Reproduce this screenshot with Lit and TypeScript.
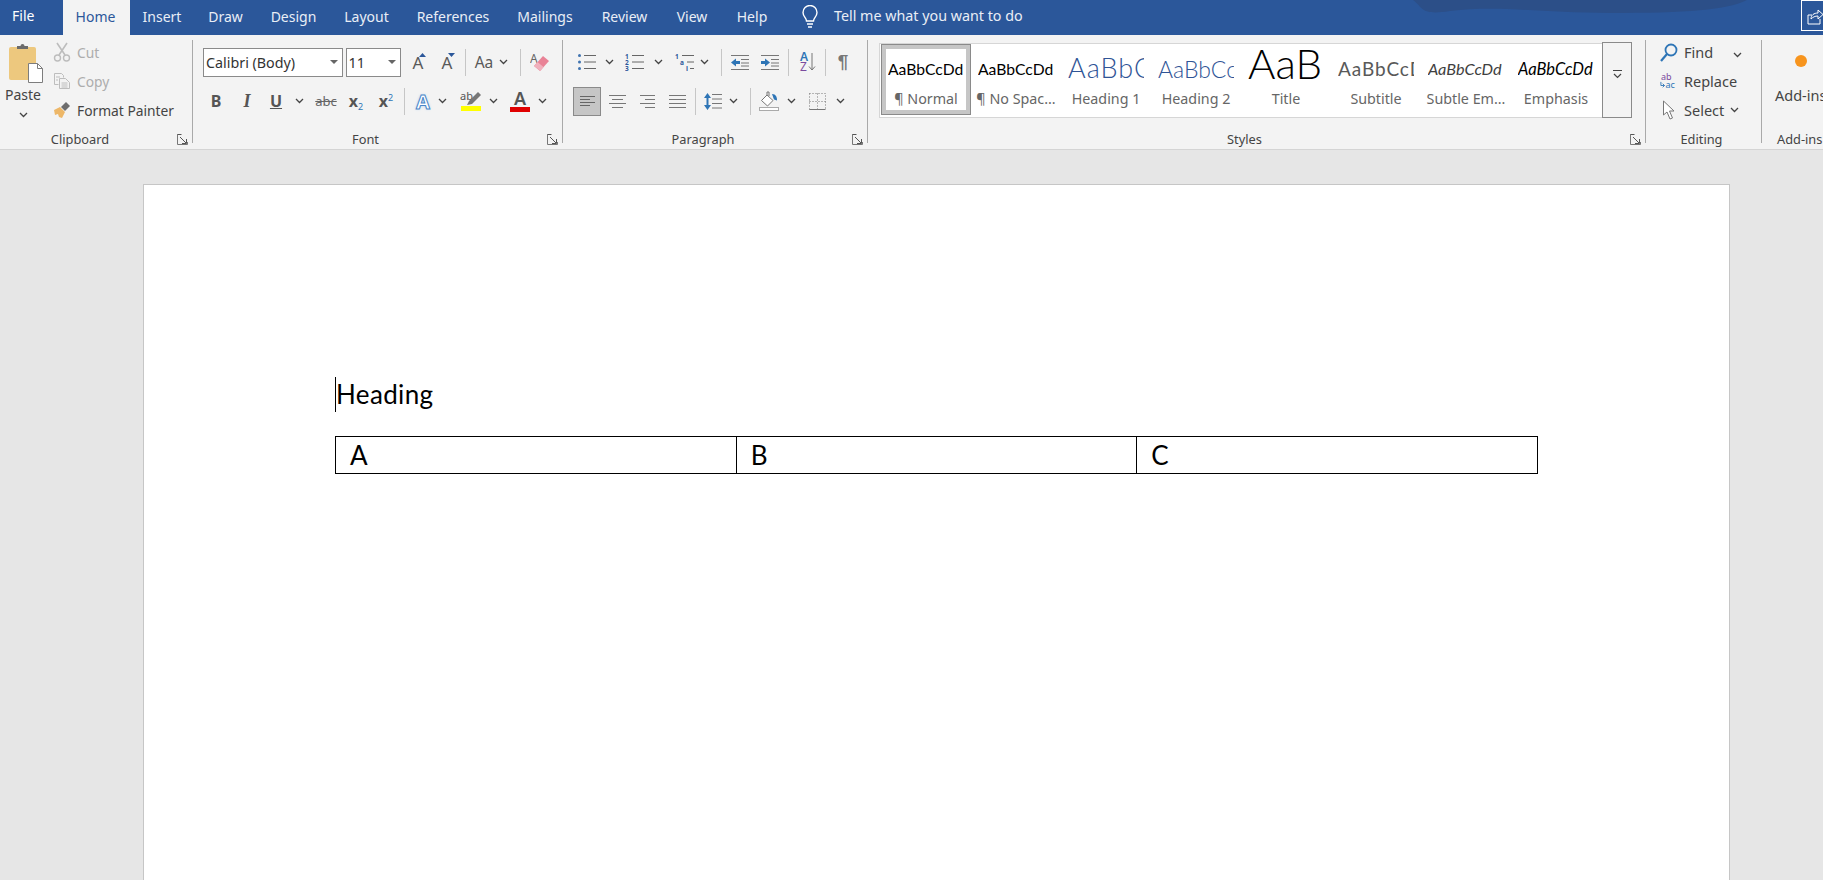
import { LitElement, html, css, svg, TemplateResult } from "lit";
import { customElement } from "lit/decorators.js";

type Cell = [number, number, TemplateResult];

// cells are given by centre x, the margins are worked out from that
const row = (origin: number, items: Cell[]) => {
  let cur = origin;
  return html`<div class="row">
    ${items.map(([c, w, t]) => {
      const ml = c - w / 2 - cur;
      cur = c + w / 2;
      return html`<div class="cell" style="margin-left:${ml}px;width:${w}px">${t}</div>`;
    })}
  </div>`;
};

const icon = (w: number, h: number, body: unknown) =>
  html`<svg width=${w} height=${h} viewBox="0 0 ${w} ${h}" fill="none">${body}</svg>`;

const chev = html`<svg width="9" height="6" viewBox="0 0 9 6" fill="none"><path d="M1 1l3.5 3.5L8 1" stroke="#444" stroke-width="1.3"/></svg>`;
const caret = html`<svg width="8" height="4" viewBox="0 0 8 4"><path d="M0 0h8L4 4z" fill="#666"/></svg>`;
const launcher = icon(11, 11, svg`<path d="M3 .5H.5v10h10V8" stroke="#777"/><path d="M.5 .5h4M3 3l6 6M5 9.5h4.5V5" stroke="#555"/>`);
const sep = (c: number): Cell => [c, 1, html`<div class="sep"></div>`];

const icons = {
  paste: icon(36, 40, svg`
    <rect x="1" y="4" width="27" height="33" rx="2" fill="#edc87e"/>
    <path d="M9 6V3h3.5a2 2 0 0 1 4 0H20v3z" fill="#6b6b6b"/>
    <path d="M20.500 20.500h9l5 5v14h-14z" fill="#fff" stroke="#7d7d7d"/>
    <path d="M29.500 20.500v5h5" stroke="#7d7d7d"/>`),
  cut: icon(18, 20, svg`
    <path d="M4 1l8 12M14 1L6 13" stroke="#bdbdbd" stroke-width="1.600"/>
    <circle cx="4.500" cy="16" r="3" stroke="#bdbdbd" stroke-width="1.400"/>
    <circle cx="13.500" cy="16" r="3" stroke="#bdbdbd" stroke-width="1.400"/>`),
  copy: icon(18, 18, svg`
    <path d="M1.500 1.500h7l2 2v2M1.500 1.500v11h4" stroke="#bdbdbd"/>
    <path d="M6.500 6.500h6l4 4v6h-10z" stroke="#bdbdbd"/>
    <path d="M3 5h4M3 8h2M8.500 11h6M8.500 13h6M8.500 15h6" stroke="#bdbdbd"/>`),
  painter: icon(18, 18, svg`
    <path d="M1 9l6-3 5 5-3 6-3-1-1-3-3 1z" fill="#edb768"/>
    <path d="M8 6l5-5 4 4-5 5z" fill="#6d6d6d"/>`),
  eraser: icon(20, 20, svg`
    <text x="0" y="11" class="ea">A</text>
    <path d="M4 14l9-10 6 5-9 10z" fill="#e98296"/>
    <path d="M4 14l3.500-4 6 5-3 4z" fill="#f0b0bc"/>`),
  highlight: icon(22, 15, svg`
    <text x="0" y="9" class="hl">ab</text>
    <path d="M7 14l2-4 9-9 3 3-9 9z" fill="#777"/>`),
  bullets: icon(20, 18, svg`
    <circle cx="2.500" cy="2.500" r="1.500" fill="#3f73b0"/><circle cx="2.500" cy="9" r="1.500" fill="#3f73b0"/><circle cx="2.500" cy="15.500" r="1.500" fill="#3f73b0"/>
    <path d="M7 2.500h12M7 9h12M7 15.500h12" stroke="#666"/>`),
  numbers: icon(20, 18, svg`
    <text x="0" y="6" class="nt">1</text><text x="0" y="12" class="nt">2</text><text x="0" y="18" class="nt">3</text>
    <path d="M7 2.500h12M7 9h12M7 15.500h12" stroke="#666"/>`),
  multi: icon(20, 18, svg`
    <text x="0" y="6" class="nt">1</text><text x="5" y="12" class="nt">a</text><text x="11" y="18" class="nt">i</text>
    <path d="M7 2.500h12M12 9h7M15 15.500h4" stroke="#666"/>`),
  outdent: icon(20, 17, svg`
    <path d="M1 1.500h18M11 5.500h8M11 9h8M11 12h8M1 15.500h18" stroke="#777"/>
    <path d="M1 8.500l5-4v2.500h4v3H6v2.500z" fill="#2e75b6"/>`),
  indent: icon(20, 17, svg`
    <path d="M1 1.500h18M11 5.500h8M11 9h8M11 12h8M1 15.500h18" stroke="#777"/>
    <path d="M10 8.500l-5-4v2.500H1v3h4v2.500z" fill="#2e75b6"/>`),
  sort: html`<span class="sort"><span class="az"><b>A</b><i>Z</i></span>${icon(8, 20, svg`<path d="M4 1v17M1 14.500l3 3.500 3-3.500" stroke="#777"/>`)}</span>`,
  left: icon(15, 11, svg`<path d="M0 .5h15M0 3.500h10M0 6.500h15M0 9.500h10" stroke="#666"/>`),
  center: icon(17, 13, svg`<path d="M0 .5h17M3 4.500h11M0 8.500h17M3 12.500h11" stroke="#777"/>`),
  right: icon(15, 13, svg`<path d="M0 .5h15M5 4.500h10M0 8.500h15M5 12.500h10" stroke="#777"/>`),
  justify: icon(17, 13, svg`<path d="M0 .5h17M0 4.500h17M0 8.500h17M0 12.500h17" stroke="#777"/>`),
  spacing: icon(18, 19, svg`
    <path d="M3.500 6v7" stroke="#2e75b6" stroke-width="2"/><path d="M0 6l3.500-5L7 6zM0 13l3.500 5L7 13z" fill="#2e75b6"/>
    <path d="M8 2.500h10M8 7h10M8 11.500h10M8 16h10" stroke="#777"/>`),
  shading: icon(20, 20, svg`
    <path d="M8 4l6 5.500-5.500 5.500-6-5.500z" fill="#fff" stroke="#777"/>
    <path d="M8 4V1h2v4" stroke="#777"/>
    <path d="M13 3c4 0 5 3 5 6.500l-3-1z" fill="#2e75b6"/>
    <rect x=".5" y="16.500" width="19" height="3" fill="#fff" stroke="#aaa"/>`),
  borders: icon(17, 17, svg`<path d="M.5 .5h16v16H.5zM8.500 .5v16M.5 8.500h16" stroke="#777" stroke-dasharray="1 2"/><path d="M.5 16.500h16" stroke="#777"/>`),
  find: icon(18, 19, svg`<circle cx="11" cy="7" r="5.500" stroke="#2e75b6" stroke-width="1.800"/><path d="M7 11l-6 7" stroke="#2e75b6" stroke-width="2.200"/>`),
  replace: icon(20, 20, svg`
    <text x="1" y="9" class="rp1">ab</text><text x="6" y="18" class="rp2">ac</text>
    <path d="M1 11v4h4M3 13l2 2-2 2" stroke="#2e75b6"/>`),
  select: icon(14, 20, svg`<path d="M1.500 1v14l3.500-3 3 7 2.500-1-3-7h4.500z" fill="#fff" stroke="#777"/>`),
  more: icon(11, 9, svg`<path d="M1 .5h9" stroke="#444"/><path d="M2 4l3.500 3.500L9 4" stroke="#444" stroke-width="1.200"/>`),
  bulb: icon(18, 24, svg`
    <path d="M5.500 16c0-3-3.500-4.500-3.500-8.500a7 7 0 0 1 14 0c0 4-3.500 5.500-3.500 8.500z" stroke="#fff" stroke-width="1.400"/>
    <path d="M6 19h6M7 22h4" stroke="#fff" stroke-width="1.400"/>`),
  share: icon(21, 29, svg`
    <path d="M18 18v5H6v-9h4" stroke="#fff"/>
    <path d="M9 18c0-4 3-6 7-6V9l5 4.500-5 4.500v-3c-3 0-5 1-7 3z" fill="#2b579a" stroke="#fff"/>`),
};

const tabs: [string, number][] = [
  ["Insert", 64],
  ["Draw", 63],
  ["Design", 73],
  ["Layout", 73],
  ["References", 100],
  ["Mailings", 84],
  ["Review", 75],
  ["View", 60],
  ["Help", 60],
];

const styleItems = [
  ["n", "¶ Normal", "AaBbCcDd"],
  ["n", "¶ No Spac...", "AaBbCcDd"],
  ["h1", "Heading 1", "AaBbCcDd"],
  ["h2", "Heading 2", "AaBbCcDd"],
  ["title", "Title", "AaBbCcDd"],
  ["sub", "Subtitle", "AaBbCcDd"],
  ["se", "Subtle Em...", "AaBbCcDd"],
  ["em", "Emphasis", "AaBbCcDd"],
];

@customElement("app-root")
export class AppRoot extends LitElement {
  static styles = css`
    :host {
      display: block;
      height: 880px;
      overflow: hidden;
      background: #e6e6e6;
      font-family: "Noto Sans", sans-serif;
      font-size: 13.8px;
      color: #444;
    }
    .tabbar {
      display: flex;
      align-items: center;
      height: 35px;
      background: #2b579a;
      color: #e9eef6;
      font-size: 14px;
      position: relative;
      overflow: hidden;
    }
    .file {
      width: 63px;
      padding-left: 12px;
      box-sizing: border-box;
      margin-top: -5px;
      color: #fff;
    }
    .home {
      box-sizing: border-box;
      width: 67px;
      height: 35px;
      padding-right: 2px;
      line-height: 34px;
      text-align: center;
      background: #f3f3f3;
      color: #2b579a;
    }
    .tab {
      margin-top: -2px;
      text-align: center;
    }
    .tell {
      display: flex;
      align-items: center;
      gap: 15px;
      margin: -5px 0 0 19px;
      font-size: 14.3px;
    }
    .tell svg {
      margin-top: 3px;
    }
    .blotch {
      position: absolute;
      top: 0;
      left: 1300px;
    }
    .share {
      margin-left: auto;
      width: 21px;
      height: 29px;
      margin-top: -4px;
      border: 1px solid #fff;
      border-right: none;
    }
    .ribbon {
      display: flex;
      box-sizing: border-box;
      height: 115px;
      padding-top: 5px;
      background: #f3f3f3;
      border-bottom: 1px solid #d4d4d4;
    }
    .group {
      display: flex;
      flex-direction: column;
      height: 103px;
      box-sizing: border-box;
      border-right: 1px solid #a9a9a9;
    }
    .group.last {
      border-right: none;
      overflow-x: clip;
    }
    .clip { width: 193px; }
    .font { width: 370px; }
    .para { width: 305px; }
    .styles { width: 778px; }
    .edit { width: 116px; }
    .addins { width: 61px; }
    .body {
      flex: 1;
      min-height: 0;
    }
    .rows {
      display: flex;
      flex-direction: column;
      gap: 11px;
      padding-top: 8px;
    }
    .foot {
      display: grid;
      grid-template-columns: 1fr auto 1fr;
      height: 14px;
      line-height: 21px;
      font-size: 12.8px;
      padding-right: 4px;
      color: #444;
    }
    .foot .name.shift {
      margin-right: 20px;
    }
    .clip .foot .name.shift {
      margin-right: 28px;
    }
    .foot .launch {
      justify-self: end;
      padding-top: 5px;
      line-height: 0;
    }
    .addfoot {
      height: 14px;
      padding-left: 15px;
      line-height: 21px;
      font-size: 12.8px;
      white-space: nowrap;
    }
    .row {
      display: flex;
      align-items: center;
      height: 28px;
    }
    .cell {
      display: flex;
      flex: none;
      align-items: center;
      justify-content: center;
      height: 28px;
      white-space: nowrap;
    }
    .sep {
      width: 1px;
      height: 27px;
      background: #c6c6c6;
      flex: none;
    }
    .combo {
      display: flex;
      flex: none;
      align-items: center;
      justify-content: space-between;
      box-sizing: border-box;
      width: 100%;
      height: 29px;
      padding: 0 4px 0 2px;
      background: #fff;
      border: 1px solid #8a8a8a;
      font-size: 14.3px;
      color: #333;
    }
    .clipbody {
      display: flex;
    }
    .paste {
      display: flex;
      flex-direction: column;
      align-items: center;
      width: 46px;
      padding-top: 3px;
      line-height: 18px;
      font-size: 14px;
    }
    .paste > svg {
      margin-left: 6px;
      margin-bottom: 3px;
    }
    .list {
      display: flex;
      flex-direction: column;
      gap: 5px;
      margin-left: 7px;
    }
    .li {
      display: flex;
      align-items: center;
      gap: 6px;
      height: 24px;
    }
    .li.off { color: #adadad; }
    .ic {
      display: flex;
      justify-content: center;
      width: 18px;
    }
    .gr {
      position: relative;
      font-size: 17px;
      color: #595959;
    }
    .gr svg {
      position: absolute;
      right: -3px;
      top: 2px;
    }
    .b { font-weight: 700; font-size: 16px; color: #555; }
    .i { font: italic 700 18px "Liberation Serif", serif; color: #555; }
    .u { font-weight: 700; font-size: 16px; color: #555; text-decoration: underline; }
    .strike { font-size: 13px; color: #666; text-decoration: line-through; }
    .x { font-weight: 700; font-size: 16px; color: #555; }
    .x small { font-size: 9px; font-weight: 400; color: #2e75b6; }
    .x .sub { vertical-align: -3px; }
    .x .sup { vertical-align: 6px; }
    .fx {
      font-weight: 700;
      font-size: 20px;
      color: #fff;
      -webkit-text-stroke: 1px #4a86c8;
      text-shadow: 0 0 3px #a9cbee;
    }
    .aa { font-size: 15.5px; color: #595959; }
    .stack {
      display: flex;
      flex-direction: column;
      align-items: center;
      line-height: 1;
    }
    .stack svg {
      display: block;
    }
    .stack .bar {
      width: 20px;
      height: 5px;
    }
    .big {
      font-size: 18px;
      font-weight: 600;
      color: #555;
      height: 17px;
      line-height: 17px;
    }
    .yellow { background: #ffff00; }
    .red { background: #e00000; }
    .nt {
      font: 700 6.500px "Noto Sans", sans-serif;
      fill: #2b579a;
    }
    .ea {
      font: 400 12px "Noto Sans", sans-serif;
      fill: #666;
    }
    .hl {
      font: 400 11px "Noto Sans", sans-serif;
      fill: #555;
    }
    .rp1 {
      font: 400 10px "Noto Sans", sans-serif;
      fill: #7a4a9e;
    }
    .rp2 {
      font: 400 10px "Noto Sans", sans-serif;
      fill: #2e75b6;
    }
    .sort {
      display: flex;
      align-items: center;
    }
    .az {
      display: flex;
      flex-direction: column;
      font: 700 12px/10px "Noto Sans", sans-serif;
      color: #2e75b6;
    }
    .az b { font-weight: 600; }
    .az i { font-style: normal; font-weight: 400; color: #7a4a9e; }
    .pil {
      font: 700 19px "Liberation Sans", sans-serif;
      color: #777;
    }
    .active {
      display: flex;
      align-items: center;
      justify-content: center;
      box-sizing: border-box;
      width: 100%;
      height: 29px;
      background: #c6c6c6;
      border: 1px solid #8a8a8a;
    }
    .gallerywrap {
      padding: 2px 0 0 11px;
      display: flex;
    }
    .gallery {
      display: flex;
      box-sizing: border-box;
      width: 723px;
      height: 75px;
      margin-top: 1px;
      padding: 0 1px;
      background: #fff;
      border: 1px solid #d6d6d6;
      border-right: none;
    }
    .more {
      display: flex;
      align-items: center;
      justify-content: center;
      box-sizing: border-box;
      width: 30px;
      height: 76px;
      padding-bottom: 12px;
      background: #f3f3f3;
      border: 1px solid #8a8a8a;
    }
    .item {
      display: flex;
      flex-direction: column;
      align-items: center;
      box-sizing: border-box;
      flex: none;
      width: 90px;
      height: 71px;
      overflow: hidden;
      padding-top: 6px;
      color: #666;
    }
    .item.sel {
      padding-top: 5px;
      border: 1px solid #8a8a8a;
      outline: 4px solid #c6c6c6;
      outline-offset: -5px;
    }
    .pv {
      display: flex;
      align-items: center;
      justify-content: flex-start;
      box-sizing: border-box;
      flex: none;
      width: 76px;
      height: 34px;
      padding-top: 4px;
      overflow: hidden;
      white-space: nowrap;
      font: 15.7px/30px Lato, sans-serif;
      color: #000;
    }
    .pv.title {
      font-size: 42px;
      font-weight: 300;
      line-height: 34px;
      padding-top: 0;
      align-items: flex-start;
    }
    .pv.title span { margin-top: -4.500px; }
    .pv.h1 { font-size: 27px; font-weight: 300; color: #2f5496; letter-spacing: 1px; padding-top: 2px; }
    .pv.h2 { font-size: 23px; font-weight: 300; color: #2f5496; }
    .pv.sub { font-size: 19px; color: #595959; letter-spacing: .9px; }
    .pv.se { font-style: italic; font-size: 16.300px; color: #404040; }
    .pv.em { font-style: italic; font-size: 16.500px; }
    .lbl {
      margin-top: 6px;
      line-height: 18px;
      font-size: 14.300px;
      white-space: nowrap;
    }
    .editlist {
      display: flex;
      flex-direction: column;
      gap: 5px;
      padding-left: 14px;
      font-size: 14.500px;
    }
    .findchev {
      margin-left: 14px;
    }
    .addbody {
      display: flex;
      flex-direction: column;
      padding: 15px 0 0 13px;
      white-space: nowrap;
      font-size: 14.500px;
    }
    .dot {
      flex: none;
      width: 12px;
      height: 12px;
      border-radius: 50%;
      margin: 0 0 18px 20px;
      background: #f7941d;
    }
    .workspace {
      padding: 34px 0 0 143px;
    }
    .page {
      box-sizing: border-box;
      width: 1587px;
      height: 700px;
      padding: 191px 0 0 191px;
      background: #fff;
      border: 1px solid #c6c6c6;
      font-family: Lato, sans-serif;
      color: #000;
    }
    .heading {
      display: flex;
      align-items: center;
      height: 36px;
      font-size: 26px;
      letter-spacing: .35px;
    }
    .cursor {
      width: 1px;
      height: 35px;
      background: #000;
    }
    table {
      border-collapse: collapse;
      table-layout: fixed;
      width: 1203px;
      margin-top: 24px;
    }
    td {
      height: 36px;
      padding: 0 0 0 14px;
      border: 1px solid #000;
      font-size: 26px;
      line-height: 36px;
    }
  `;

  private foot(label: string, dialog = true) {
    return html`<div class="foot">
      <span></span><span class="name ${dialog ? "shift" : ""}">${label}</span>
      ${dialog ? html`<span class="launch">${launcher}</span>` : html`<span></span>`}
    </div>`;
  }

  private clipboard() {
    return html`<div class="group clip">
      <div class="body clipbody">
        <div class="paste">${icons.paste}<span>Paste</span><span>${chev}</span></div>
        <div class="list">
          <div class="li off"><span class="ic">${icons.cut}</span>Cut</div>
          <div class="li off"><span class="ic">${icons.copy}</span>Copy</div>
          <div class="li"><span class="ic">${icons.painter}</span>Format Painter</div>
        </div>
      </div>
      ${this.foot("Clipboard")}
    </div>`;
  }

  private fontGroup() {
    const o = 193;
    return html`<div class="group font">
      <div class="body rows">
        ${row(o, [
          [273, 140, html`<div class="combo"><span>Calibri (Body)</span>${caret}</div>`],
          [373, 55, html`<div class="combo"><span>11</span>${caret}</div>`],
          [418, 16, html`<span class="gr">A${icon(7, 4, svg`<path d="M0 4l3.500-4L7 4z" fill="#2b579a"/>`)}</span>`],
          [447, 16, html`<span class="gr">A${icon(7, 4, svg`<path d="M0 0h7L3.500 4z" fill="#2b579a"/>`)}</span>`],
          sep(465),
          [484, 24, html`<span class="aa">Aa</span>`],
          [503, 9, chev],
          sep(520),
          [540, 20, icons.eraser],
        ])}
        ${row(o, [
          [216, 14, html`<span class="b">B</span>`],
          [247, 14, html`<span class="i">I</span>`],
          [276, 14, html`<span class="u">U</span>`],
          [299, 9, chev],
          [326, 24, html`<span class="strike">abc</span>`],
          [356, 20, html`<span class="x">x<small class="sub">2</small></span>`],
          [386, 20, html`<span class="x">x<small class="sup">2</small></span>`],
          sep(404),
          [423, 18, html`<span class="fx">A</span>`],
          [442, 9, chev],
          [471, 22, html`<div class="stack">${icons.highlight}<span class="bar yellow"></span></div>`],
          [493, 9, chev],
          [520, 20, html`<div class="stack"><span class="big">A</span><span class="bar red"></span></div>`],
          [542, 9, chev],
        ])}
      </div>
      ${this.foot("Font")}
    </div>`;
  }

  private paragraph() {
    const o = 563;
    return html`<div class="group para">
      <div class="body rows">
        ${row(o, [
          [587, 20, icons.bullets],
          [609, 9, chev],
          [635, 20, icons.numbers],
          [658, 9, chev],
          [685, 20, icons.multi],
          [704, 9, chev],
          sep(721),
          [740, 20, icons.outdent],
          [770, 20, icons.indent],
          sep(788),
          [808, 20, icons.sort],
          sep(825),
          [843, 14, html`<span class="pil">¶</span>`],
        ])}
        ${row(o, [
          [587, 28, html`<div class="active">${icons.left}</div>`],
          [617, 17, icons.center],
          [647, 15, icons.right],
          [677, 17, icons.justify],
          sep(695),
          [713, 18, icons.spacing],
          [733, 9, chev],
          sep(750),
          [769, 20, icons.shading],
          [791, 9, chev],
          [817, 17, icons.borders],
          [840, 9, chev],
        ])}
      </div>
      ${this.foot("Paragraph")}
    </div>`;
  }

  private stylesGroup() {
    return html`<div class="group styles">
      <div class="body gallerywrap">
        <div class="gallery">
          ${styleItems.map(
            ([cls, label, sample], i) => html`<div class="item ${i === 0 ? "sel" : ""}">
              <div class="pv ${cls}"><span>${cls === "title" ? "AaB" : sample}</span></div>
              <span class="lbl">${label}</span>
            </div>`
          )}
        </div>
        <div class="more">${icons.more}</div>
      </div>
      ${this.foot("Styles")}
    </div>`;
  }

  private editing() {
    return html`<div class="group edit">
      <div class="body editlist">
        <div class="li"><span class="ic">${icons.find}</span>Find<span class="findchev">${chev}</span></div>
        <div class="li"><span class="ic">${icons.replace}</span>Replace</div>
        <div class="li"><span class="ic">${icons.select}</span>Select ${chev}</div>
      </div>
      ${this.foot("Editing", false)}
    </div>`;
  }

  render() {
    return html`
      <div class="tabbar">
        <svg class="blotch" width="460" height="16" viewBox="0 0 460 16"><path d="M113 0h334c-20 10-60 13-137 13-70 0-110-8-160-2-30 5-27-4-37-11z" fill="#2c4f88"/></svg>
        <span class="file">File</span>
        <span class="home">Home</span>
        ${tabs.map(([t, w]) => html`<span class="tab" style="width:${w}px">${t}</span>`)}
        <span class="tell">${icons.bulb}<span>Tell me what you want to do</span></span>
        <span class="share">${icons.share}</span>
      </div>
      <div class="ribbon">
        ${this.clipboard()} ${this.fontGroup()} ${this.paragraph()} ${this.stylesGroup()} ${this.editing()}
        <div class="group addins last">
          <div class="body addbody"><span class="dot"></span><span>Add-ins</span></div>
          <div class="addfoot">Add-ins</div>
        </div>
      </div>
      <div class="workspace">
        <div class="page">
          <div class="heading"><span class="cursor"></span>Heading</div>
          <table>
            <tr><td>A</td><td>B</td><td>C</td></tr>
          </table>
        </div>
      </div>
    `;
  }
}
